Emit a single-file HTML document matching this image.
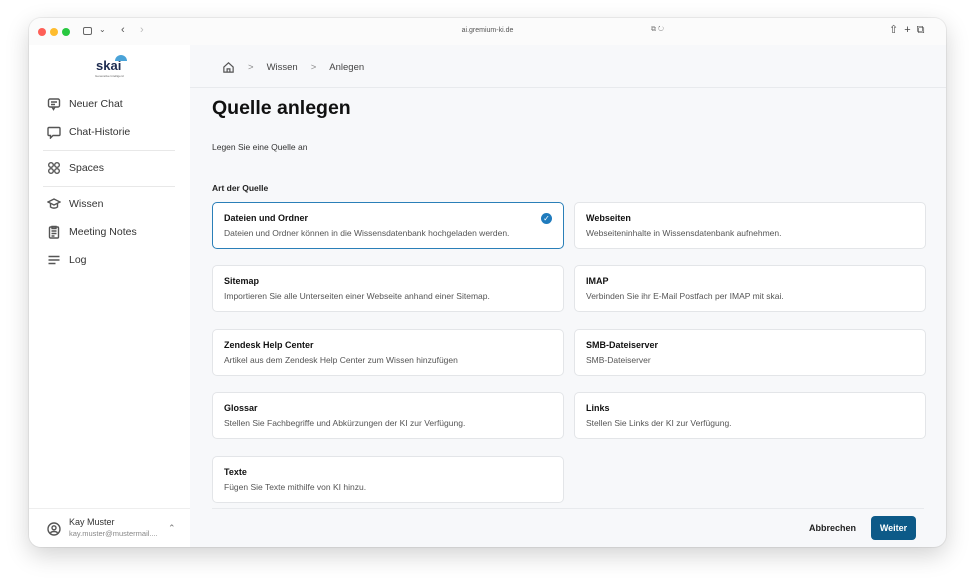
<!DOCTYPE html>
<html><head><meta charset="utf-8"><style>
*{box-sizing:border-box;margin:0;padding:0}
body{width:975px;height:585px;background:#fff;font-family:"Liberation Sans",Arial,sans-serif;position:relative;overflow:hidden}
.win{position:absolute;left:29px;top:18px;width:917px;height:529px;border-radius:12px;background:#f7f8fa;box-shadow:0 8px 24px rgba(0,0,0,.18),0 0 0 1px rgba(0,0,0,.06);overflow:hidden}
.tb{position:absolute;left:0;top:0;width:100%;height:27px;background:#fbfbfb}
.dot{position:absolute;top:10px;width:8px;height:8px;border-radius:50%}
.url{position:absolute;left:0;width:100%;top:9px;text-align:center;font-size:7px;color:#555}
.side{position:absolute;left:0;top:27px;width:161px;bottom:0;background:#fff}
.nav{position:absolute;left:18px;font-size:10.5px;color:#333;display:flex;align-items:center}
.nav svg{width:14px;height:14px;margin-right:8px;fill:none;stroke:#555;stroke-width:1.4}
.hr{position:absolute;left:14px;width:132px;height:1px;background:#e8e8e8}
.main{position:absolute;left:161px;top:27px;right:0;bottom:0}
.card{position:absolute;width:352px;height:47px;background:#fff;border:1px solid #e3e5e8;border-radius:5px;padding:10px 0 0 11px;line-height:11px}
.card b{display:block;font-size:9px;color:#111;margin-bottom:4px}
.card span{display:block;font-size:8.5px;color:#555}
.sel{border:1.5px solid #2a7fb8}
</style></head><body>
<div class="win">
 <div class="tb">
  <div class="dot" style="left:9px;background:#fe5f57"></div>
  <div class="dot" style="left:21px;background:#febc2e"></div>
  <div class="dot" style="left:33px;background:#28c840"></div>
  <div style="position:absolute;left:54px;top:9px;width:9px;height:8px;border:1px solid #666;border-radius:2px"></div>
  <div style="position:absolute;left:70px;top:7px;font-size:8px;color:#555">⌄</div>
  <div style="position:absolute;left:92px;top:6px;font-size:11px;color:#555">‹</div>
  <div style="position:absolute;left:111px;top:6px;font-size:11px;color:#bbb">›</div>
  <div class="url">ai.gremium-ki.de</div>
  <div style="position:absolute;left:622px;top:8px;font-size:7px;color:#777">⧉ ↻</div>
  <div style="position:absolute;left:860px;top:5px;font-size:11px;color:#444;letter-spacing:6px">⇧+⧉</div>
 </div>
 <div class="side">
  <div style="position:absolute;left:67px;top:13px;font-size:13px;font-weight:bold;color:#1d2b4f">skai</div>
  <div style="position:absolute;left:86px;top:10px;width:12px;height:6px;border-radius:6px 6px 0 0;background:#4aa3d8"></div>
  <div style="position:absolute;left:66px;top:29px;font-size:3px;color:#666">Generative Intelligenz</div>
  <div class="nav" style="top:52px"><svg viewBox="0 0 14 14"><rect x="1.5" y="2" width="11" height="8" rx="1.5"/><path d="M4 5h6M4 7.5h4M5 10l1.5 2.5L8 10"/></svg>Neuer Chat</div>
  <div class="nav" style="top:80px"><svg viewBox="0 0 14 14"><path d="M2 2.5h10a1 1 0 011 1v6a1 1 0 01-1 1H6l-2.5 2.5V10.5H2a1 1 0 01-1-1v-6a1 1 0 011-1z"/></svg>Chat-Historie</div>
  <div class="hr" style="top:105px"></div>
  <div class="nav" style="top:116px"><svg viewBox="0 0 14 14"><circle cx="4" cy="4" r="2.3"/><circle cx="10" cy="4" r="2.3"/><circle cx="4" cy="10" r="2.3"/><circle cx="10" cy="10" r="2.3"/></svg>Spaces</div>
  <div class="hr" style="top:141px"></div>
  <div class="nav" style="top:152px"><svg viewBox="0 0 14 14"><path d="M1 5l6-3 6 3-6 3zM3.5 6.5v3.5c2 1.5 5 1.5 7 0V6.5"/></svg>Wissen</div>
  <div class="nav" style="top:180px"><svg viewBox="0 0 14 14"><rect x="2.5" y="2" width="9" height="11" rx="1"/><path d="M5 1.5h4v2H5zM4.5 6h5M4.5 8.5h5M4.5 11h3"/></svg>Meeting Notes</div>
  <div class="nav" style="top:208px"><svg viewBox="0 0 14 14"><path d="M1.5 3.5h11M1.5 7h11M1.5 10.5h7"/></svg>Log</div>
  <div style="position:absolute;left:0;right:0;top:463px;height:1px;background:#eee"></div>
  <div class="nav" style="top:472px;align-items:flex-start"><svg viewBox="0 0 14 14" style="margin-top:5px"><circle cx="7" cy="7" r="6"/><circle cx="7" cy="5.8" r="2"/><path d="M3.5 11c1-2 6-2 7 0"/></svg><div><div style="font-size:9px;color:#333">Kay Muster</div><div style="font-size:7.5px;color:#888;margin-top:2px">kay.muster@mustermail....</div></div></div>
  <div style="position:absolute;left:139px;top:478px;font-size:9px;color:#777">⌃</div>
 </div>
 <div class="main">
  <div style="position:absolute;left:32px;top:16px;font-size:9.5px;color:#444;display:flex;align-items:center;gap:0">
   <svg width="13" height="13" viewBox="0 0 14 14" fill="none" stroke="#555" stroke-width="1.3"><path d="M2 6.5L7 2l5 4.5V12H2z M5.5 12V8.5h3V12"/></svg>
   <span style="margin:0 13px 0 13px;color:#888">&gt;</span>Wissen<span style="margin:0 13px;color:#888">&gt;</span>Anlegen</div>
  <div style="position:absolute;left:0;right:0;top:42px;height:1px;background:#e8eaed"></div>
  <div style="position:absolute;left:22px;top:52px;font-size:19.5px;font-weight:bold;color:#111">Quelle anlegen</div>
  <div style="position:absolute;left:22px;top:97px;font-size:8.5px;color:#333">Legen Sie eine Quelle an</div>
  <div style="position:absolute;left:22px;top:138px;font-size:8.5px;color:#222;font-weight:bold">Art der Quelle</div>
  <div class="card sel" style="left:22px;top:157px"><b>Dateien und Ordner</b><span>Dateien und Ordner können in die Wissensdatenbank hochgeladen werden.</span>
   <div style="position:absolute;right:11px;top:10px;width:11px;height:11px;border-radius:50%;background:#1f7bbd;color:#fff;font-size:8px;text-align:center;line-height:11px">✓</div></div>
  <div class="card" style="left:384px;top:157px"><b>Webseiten</b><span>Webseiteninhalte in Wissensdatenbank aufnehmen.</span></div>
  <div class="card" style="left:22px;top:220px"><b>Sitemap</b><span>Importieren Sie alle Unterseiten einer Webseite anhand einer Sitemap.</span></div>
  <div class="card" style="left:384px;top:220px"><b>IMAP</b><span>Verbinden Sie ihr E-Mail Postfach per IMAP mit skai.</span></div>
  <div class="card" style="left:22px;top:284px"><b>Zendesk Help Center</b><span>Artikel aus dem Zendesk Help Center zum Wissen hinzufügen</span></div>
  <div class="card" style="left:384px;top:284px"><b>SMB-Dateiserver</b><span>SMB-Dateiserver</span></div>
  <div class="card" style="left:22px;top:347px"><b>Glossar</b><span>Stellen Sie Fachbegriffe und Abkürzungen der KI zur Verfügung.</span></div>
  <div class="card" style="left:384px;top:347px"><b>Links</b><span>Stellen Sie Links der KI zur Verfügung.</span></div>
  <div class="card" style="left:22px;top:411px"><b>Texte</b><span>Fügen Sie Texte mithilfe von KI hinzu.</span></div>
  <div style="position:absolute;left:22px;right:22px;top:463px;height:1px;background:#e8eaed"></div>
  <div style="position:absolute;left:619px;top:478px;font-size:9px;font-weight:bold;color:#222">Abbrechen</div>
  <div style="position:absolute;left:681px;top:471px;width:45px;height:24px;border-radius:4px;background:#0d5a88;color:#fff;font-size:9px;font-weight:bold;text-align:center;line-height:24px">Weiter</div>
 </div>
</div>
</body></html>
